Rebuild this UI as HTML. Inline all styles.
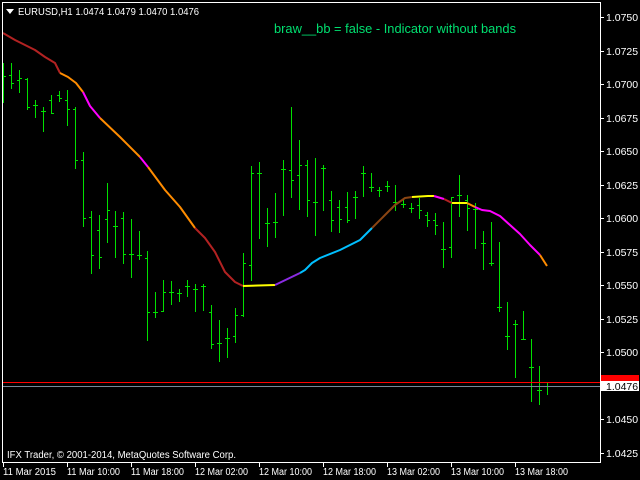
<!DOCTYPE html>
<html><head><meta charset="utf-8"><style>
html,body{margin:0;padding:0;background:#000;width:640px;height:480px;overflow:hidden}
svg{display:block}
text{font-family:"Liberation Sans",sans-serif}
</style></head><body>
<svg id="s" width="640" height="480" xmlns="http://www.w3.org/2000/svg">
<rect width="640" height="480" fill="#000"/>
<g id="bars" fill="#00e000"></g>
<g id="curve" fill="none" stroke-width="2" stroke-linejoin="round"></g>
<rect x="2" y="382" width="598" height="1" fill="#ff0000"/>
<rect x="2" y="386" width="598" height="1" fill="#778899"/>
<rect x="2" y="2" width="1" height="461" fill="#fff"/>
<rect x="2" y="2" width="599" height="1" fill="#fff"/>
<rect x="600" y="2" width="1" height="461" fill="#fff"/>
<rect x="2" y="462" width="599" height="1" fill="#fff"/>
<g id="axis" fill="#fff" font-size="10.5"></g>
<rect x="601" y="375" width="38" height="6" fill="#ff0000"/>
<rect x="601" y="381" width="38" height="10" fill="#fff"/>
<text x="606" y="390" font-size="10.5" fill="#000">1.0476</text>
<polygon points="6,9 14,9 10,14" fill="#fff"/>
<text x="18" y="15" font-size="10" fill="#fff" textLength="181" lengthAdjust="spacingAndGlyphs">EURUSD,H1  1.0474 1.0479 1.0470 1.0476</text>
<text x="274" y="33" font-size="13" fill="#00e070" textLength="242" lengthAdjust="spacingAndGlyphs">braw__bb = false - Indicator without bands</text>
<text x="7" y="458" font-size="10" fill="#fff" textLength="229" lengthAdjust="spacingAndGlyphs">IFX Trader, © 2001-2014, MetaQuotes Software Corp.</text>
</svg>
<script>
var NS="http://www.w3.org/2000/svg";
function el(t,a,p){var e=document.createElementNS(NS,t);for(var k in a)e.setAttribute(k,a[k]);p.appendChild(e);return e;}
var B=[[3,63,103,null,76],[11,63,89,75,83],[19,70,93,80,78],[27,78,110,79,107],[35,100,118,105,105],[43,107,132,111,111],[51,95,114,100,113],[59,91,102,95,98],[67,90,126,100,109],[75,107,169,109,160],[83,152,227,160,218],[91,211,274,217,255],[99,215,269,230,257],[107,183,243,219,210],[115,211,258,226,226],[123,212,264,218,254],[131,219,278,254,254],[139,231,260,255,255],[147,251,341,258,312],[155,292,318,312,312],[163,280,312,311,292],[171,281,305,292,292],[179,289,302,293,293],[187,280,297,286,286],[195,284,312,289,289],[203,284,311,286,286],[211,305,349,312,344],[219,320,362,343,343],[227,328,358,338,338],[235,308,343,336,315],[243,253,317,315,263],[251,166,281,265,173],[259,162,239,173,173],[267,208,247,223,223],[275,193,238,222,222],[283,160,216,169,169],[291,107,198,170,180],[299,140,210,175,165],[307,160,217,165,200],[315,158,236,202,202],[323,165,211,168,168],[331,191,232,200,220],[339,200,233,207,219],[347,192,223,207,220],[355,191,219,197,197],[363,166,197,173,173],[371,173,192,187,187],[379,187,197,190,190],[387,181,192,186,186],[395,185,211,202,202],[403,200,208,204,204],[411,203,213,208,208],[419,198,219,205,210],[427,212,227,215,220],[435,213,235,220,225],[443,222,268,249,249],[451,197,258,247,197],[459,175,217,195,195],[467,195,231,200,208],[475,203,249,209,209],[483,231,270,243,243],[491,222,266,263,263],[499,242,312,307,307],[507,302,350,336,336],[515,320,378,324,324],[523,311,340,339,339],[531,339,402,367,367],[539,366,405,390,390],[547,382,395,386,386]];
var g=document.getElementById("bars");
B.forEach(function(b){var x=b[0];el("rect",{x:x,y:b[1],width:1,height:b[2]-b[1]},g);
if(b[3]!=null)el("rect",{x:x-2,y:b[3],width:2,height:1},g);
el("rect",{x:x+1,y:b[4],width:2,height:1},g);});
var C=[
["#b22222","3,33 15,40 25,45 35,50 45,57 55,63 60,73"],
["#ff8c00","60,73 68,77 76,83 83,92"],
["#ff00ff","83,92 90,106 100,118"],
["#ff8c00","100,118 120,137 140,157"],
["#ff00ff","140,157 148,167"],
["#ff8c00","148,167 165,190 180,207 195,228"],
["#b22222","195,228 205,238 215,252 225,272 235,282 243,286"],
["#ffff00","243,286 275,285"],
["#8a2be2","275,285 300,273"],
["#00bfff","300,273 305,270 312,263 320,258 340,250 360,240 372,228"],
["#8b4513","372,228 385,215 395,205 405,198 412,197"],
["#ffff00","412,197 428,196 434,196"],
["#ff00ff","434,196 444,199"],
["#b22222","444,199 452,203"],
["#ffff00","452,203 467,203"],
["#ff8c00","467,203 475,207"],
["#ff00ff","475,207 482,210 490,211 500,216 510,225 520,234 530,245 540,255"],
["#ff8c00","540,255 547,266"]];
var cg=document.getElementById("curve");
C.forEach(function(c){el("polyline",{points:c[1],stroke:c[0]},cg);});
var a=document.getElementById("axis");
var P=["1.0750","1.0725","1.0700","1.0675","1.0650","1.0625","1.0600","1.0575","1.0550","1.0525","1.0500","1.0450","1.0425"];
var idx=[0,1,2,3,4,5,6,7,8,9,10,12,13];
idx.forEach(function(i,k){var y=Math.round(17+i*33.5);el("rect",{x:601,y:y,width:3,height:1},a);var t=el("text",{x:606,y:y+4},a);t.textContent=P[k];});
var T=["11 Mar 2015","11 Mar 10:00","11 Mar 18:00","12 Mar 02:00","12 Mar 10:00","12 Mar 18:00","13 Mar 02:00","13 Mar 10:00","13 Mar 18:00"];
T.forEach(function(s,i){var x=3+i*64;el("rect",{x:x,y:463,width:1,height:4},a);var t=el("text",{x:x,y:475,"font-size":10,textLength:53,lengthAdjust:"spacingAndGlyphs"},a);t.textContent=s;});
</script>
</body></html>
